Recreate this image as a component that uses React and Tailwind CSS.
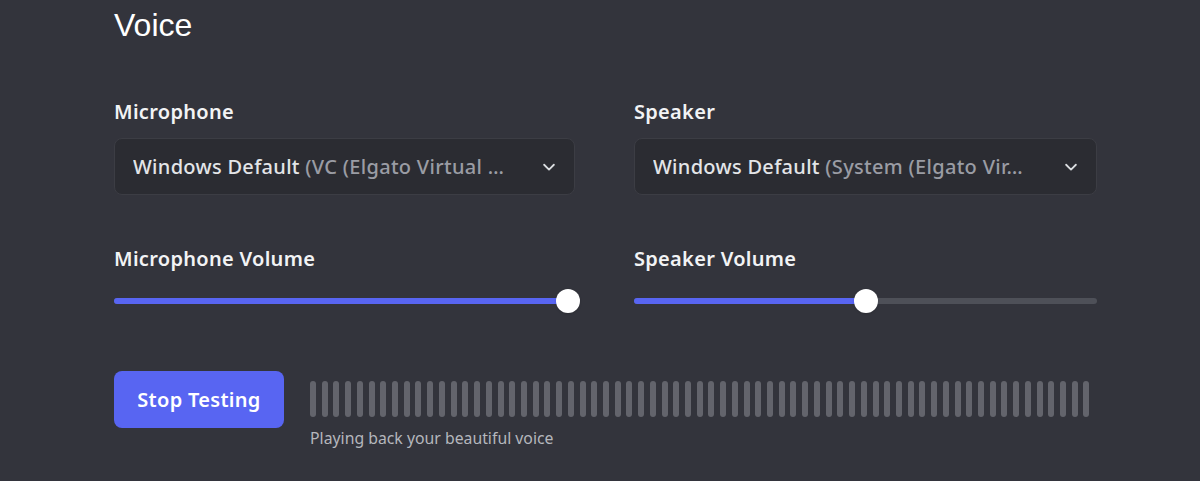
import React from "react";

const font = { fontFamily: '"Noto Sans", "Open Sans", sans-serif' };

function Chevron() {
  return (
    <svg width="18" height="18" viewBox="0 0 24 24" fill="none" className="text-[#dbdee1]">
      <path d="M5.5 9l6.5 6.5L18.5 9" stroke="currentColor" strokeWidth="2.4" strokeLinecap="round" strokeLinejoin="round" />
    </svg>
  );
}

function Select({ main, rest }) {
  return (
    <div className="flex h-[57px] items-center justify-between rounded-[8px] border border-[#3c3d44] bg-[#2b2c32] pl-[18px] pr-[16px]">
      <span className="truncate text-[20px] font-medium tracking-[0.3px]">
        <span className="text-[#e3e5e8]">{main}</span>
        <span className="text-[#9a9ca4]">{rest}</span>
      </span>
      <Chevron />
    </div>
  );
}

function Slider({ value }) {
  return (
    <div className="relative mt-[16px] h-[24px]">
      <div className="absolute left-0 right-0 top-[9px] h-[6px] rounded-full bg-[#4e5058]" />
      <div className="absolute left-0 top-[9px] h-[6px] rounded-full bg-[#5865f2]" style={{ width: `${value}%` }} />
      <div
        className="absolute top-0 h-[24px] w-[24px] -translate-x-1/2 rounded-full bg-white shadow"
        style={{ left: `${value}%` }}
      />
    </div>
  );
}

function Column({ label, main, rest, volLabel, value }) {
  return (
    <div className="flex flex-col">
      <div className="h-[28px] text-[20px] font-semibold leading-[28px] tracking-[0.3px] text-[#f2f3f5]">{label}</div>
      <div className="mt-[12px]">
        <Select main={main} rest={rest} />
      </div>
      <div className="mt-[50px] h-[28px] text-[20px] font-semibold leading-[28px] tracking-[0.3px] text-[#f2f3f5]">
        {volLabel}
      </div>
      <Slider value={value} />
    </div>
  );
}

export default function App() {
  const bars = Array.from({ length: 67 });
  return (
    <div className="h-[481px] w-[1200px] overflow-hidden bg-[#33343c]" style={font}>
      <div className="ml-[114px] w-[983px]">
        <h1
          className="pt-[5px] text-[32px] leading-[40px] text-white"
          style={{ fontFamily: '"Liberation Sans", Arial, sans-serif' }}
        >
          Voice
        </h1>
        <div className="mt-[53px] grid grid-cols-[461px_463px] gap-x-[59px]">
          <Column
            label="Microphone"
            main="Windows Default"
            rest=" (VC (Elgato Virtual …"
            volLabel="Microphone Volume"
            value={98.5}
          />
          <Column
            label="Speaker"
            main="Windows Default"
            rest=" (System (Elgato Vir…"
            volLabel="Speaker Volume"
            value={50}
          />
        </div>
        <div className="mt-[58px] flex items-start gap-[26px]">
          <button className="h-[57px] w-[170px] shrink-0 rounded-[8px] bg-[#5865f2] text-[20px] font-semibold tracking-[0.3px] text-white">
            Stop Testing
          </button>
          <div className="flex w-[780px] flex-col pt-[10px]">
            <div className="flex h-[36px] justify-between">
              {bars.map((_, i) => (
                <div key={i} className="h-full w-[6px] rounded-full bg-[#63646c]" />
              ))}
            </div>
            <div className="mt-[11px] text-[15.8px] leading-[20px] text-[#b5b7bd]">
              Playing back your beautiful voice
            </div>
          </div>
        </div>
      </div>
    </div>
  );
}
